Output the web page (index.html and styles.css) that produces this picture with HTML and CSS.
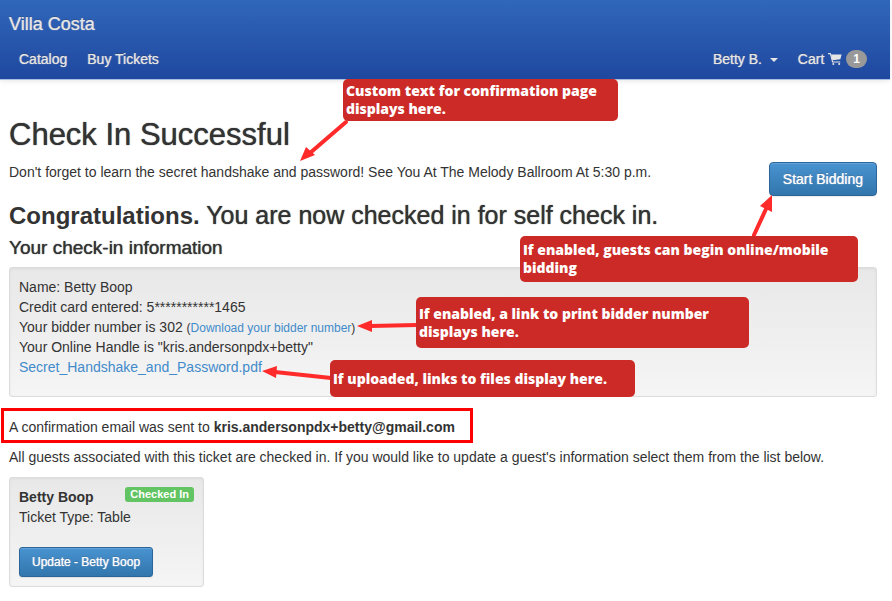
FILE: index.html
```html
<!DOCTYPE html>
<html lang="en">
<head>
<meta charset="UTF-8">
<meta name="viewport" content="width=device-width, initial-scale=1.0">
<title>Villa Costa - Check In</title>
<link rel="stylesheet" href="styles.css">
</head>
<body>
  <header class="navbar">
    <a class="brand" href="#">Villa Costa</a>
    <nav class="nav-row">
      <div class="nav-links">
        <a href="#">Catalog</a>
        <a href="#">Buy Tickets</a>
      </div>
      <div class="nav-links">
        <button type="button" class="user-menu">Betty B. <span class="caret"></span></button>
        <a class="cart" href="#">Cart
          <svg class="cart-icon" viewBox="0 0 14 12" width="14" height="12" aria-hidden="true">
            <path d="M0.5 0.6H2.4L4.6 9H11.8" fill="none" stroke="#e6e6e6" stroke-width="1.1" stroke-linecap="round" stroke-linejoin="round"/>
            <path d="M3 1.4H13.6L12.4 6.2L4.4 7.3Z" fill="#e6e6e6"/>
            <circle cx="5.3" cy="10.9" r="1" fill="#e6e6e6"/>
            <circle cx="11.2" cy="10.9" r="1" fill="#e6e6e6"/>
          </svg>
          <span class="badge">1</span>
        </a>
      </div>
    </nav>
  </header>

  <main class="container">
    <h1>Check In Successful</h1>
    <div class="intro">
      <p>Don't forget to learn the secret handshake and password! See You At The Melody Ballroom At 5:30 p.m.</p>
      <button type="button" class="btn btn-bid">Start Bidding</button>
    </div>

    <h2><strong>Congratulations.</strong> You are now checked in for self check in.</h2>
    <h3>Your check-in information</h3>
    <div class="well info">
      Name: Betty Boop<br>
      Credit card entered: 5***********1465<br>
      Your bidder number is 302 <small>(<a href="#">Download your bidder number</a>)</small><br>
      Your Online Handle is "kris.andersonpdx+betty"<br>
      <a href="#">Secret_Handshake_and_Password.pdf</a>
    </div>

    <p class="email">A confirmation email was sent to <strong>kris.andersonpdx+betty@gmail.com</strong></p>
    <p class="guests-text">All guests associated with this ticket are checked in. If you would like to update a guest's information select them from the list below.</p>

    <div class="well guest">
      <div class="guest-head">
        <strong>Betty Boop</strong>
        <span class="label">Checked In</span>
      </div>
      <div>Ticket Type: Table</div>
      <button type="button" class="btn btn-update">Update - Betty Boop</button>
    </div>
  </main>

  <!-- Help notes over the page -->
  <svg class="arrows" width="892" height="601" viewBox="0 0 892 601" aria-hidden="true">
    <g stroke="#ff2a2a" stroke-width="4" stroke-linecap="round">
      <path d="M346 122L310 153"/>
      <path d="M754 235L766 209"/>
      <path d="M417 325L370 326"/>
      <path d="M331 378L275 372"/>
    </g>
    <g fill="#ff2a2a">
      <path d="M300 161L306 147L315 155Z"/>
      <path d="M772 195L772 212L760 206Z"/>
      <path d="M357 326L372 320V332Z"/>
      <path d="M262 371L277 366L276 378Z"/>
    </g>
  </svg>
  <div class="note note-custom">Custom text for confirmation page displays here.</div>
  <div class="note note-bidding">If enabled, guests can begin online/mobile bidding</div>
  <div class="note note-number">If enabled, a link to print bidder number displays here.</div>
  <div class="note note-files">If uploaded, links to files display here.</div>
</body>
</html>
```
FILE: styles.css
```css
body {
  position: relative;
  margin: 0;
  padding-right: 2px;
  background-color: #fff;
  color: #333;
  font-family: "Helvetica Neue", "Liberation Sans", Arial, sans-serif;
  font-size: 14px;
  line-height: 20px;
}

a {
  color: #428bca;
  text-decoration: none;
}

p {
  margin: 0;
}

button {
  font-family: inherit;
  cursor: pointer;
}

/* Top bar */
.navbar {
  padding: 14px 9px 10px;
  background-image: linear-gradient(#3067bb, #1f489f);
  border-bottom: 1px solid #a9c0e4;
  box-shadow: 0 1px 5px rgba(0, 0, 0, 0.1);
}

.navbar a,
.user-menu {
  color: #e6e6e6;
  text-shadow: 0 -1px 0 rgba(0, 0, 0, 0.25), 0 0 1px #e6e6e6;
}

.navbar .brand {
  display: block;
  font-size: 18px;
}

.nav-row {
  display: flex;
  justify-content: space-between;
  margin-top: 15px;
  padding: 0 14px 0 10px;
}

.nav-links {
  display: flex;
  align-items: center;
  gap: 20px;
}

.user-menu {
  padding: 0;
  background: none;
  border: 0;
  font-size: 14px;
  line-height: 20px;
}

.caret {
  display: inline-block;
  margin-left: 4px;
  border-top: 4px solid #e6e6e6;
  border-right: 4px solid transparent;
  border-left: 4px solid transparent;
  vertical-align: middle;
}

.cart {
  display: flex;
  align-items: center;
  gap: 4px;
}

.badge {
  padding: 3px 7px;
  border-radius: 10px;
  background-color: #999;
  color: #fff;
  font-size: 12px;
  font-weight: bold;
  line-height: 12px;
  text-shadow: none;
}

/* Content */
.container {
  padding: 38px 13px 14px 9px;
}

h1,
h2,
h3 {
  margin: 0;
  font-weight: normal;
  text-shadow: 0 0 1px #333;
}

h1 {
  font-size: 31px;
  line-height: 34px;
}

.intro {
  display: flex;
  justify-content: space-between;
  margin-top: 10px;
}

h2 {
  margin-top: 6px;
  font-size: 25px;
  line-height: 26px;
}

h2 strong {
  font-size: 24px;
  text-shadow: none;
}

h3 {
  margin: 9px 0;
  font-size: 19px;
  line-height: 20px;
}

.btn {
  border: 1px solid #2b669a;
  border-radius: 4px;
  background-image: linear-gradient(#4893d1, #3276ac);
  box-shadow: inset 0 1px 0 rgba(255, 255, 255, 0.15), 0 1px 1px rgba(0, 0, 0, 0.08);
  color: #fff;
  text-shadow: 0 -1px 0 rgba(0, 0, 0, 0.2), 0 0 1px #fff;
}

.btn-bid {
  padding: 6px 13px;
  font-size: 14px;
  line-height: 20px;
}

.btn-update {
  margin-top: 20px;
  padding: 5px 12px;
  border-radius: 3px;
  font-size: 12px;
  line-height: 18px;
}

.well {
  padding: 9px;
  border: 1px solid #dcdcdc;
  border-radius: 3px;
  background-image: linear-gradient(#e8e8e8, #f5f5f5);
  box-shadow: inset 0 1px 3px rgba(0, 0, 0, 0.05);
}

.info {
  padding-bottom: 19px;
}

.info small {
  font-size: 12px;
  line-height: 12px;
}

.email {
  width: fit-content;
  margin: 11px 0 0 -8px;
  padding: 6px 15px 3px 5px;
  border: 3px solid #f00;
}

.guests-text {
  margin: 4px 0 10px;
}

.guest {
  box-sizing: border-box;
  width: 195px;
}

.guest-head {
  display: flex;
  justify-content: space-between;
  align-items: flex-start;
}

.label {
  padding: 2px 5px;
  border-radius: 3px;
  background-color: #62c462;
  color: #fff;
  font-size: 11px;
  font-weight: bold;
  line-height: 11px;
}

/* Help notes */
.arrows {
  position: absolute;
  top: 0;
  left: 0;
  pointer-events: none;
}

.note {
  position: absolute;
  box-sizing: border-box;
  display: flex;
  align-items: center;
  padding: 0 3px;
  border-radius: 5px;
  background-color: #cc2a26;
  color: #fff;
  font-family: "Open Sans", sans-serif;
  font-size: 14px;
  font-weight: 800;
  line-height: 18px;
}

.note-custom {
  top: 79px;
  left: 343px;
  width: 275px;
  height: 42px;
}

.note-bidding {
  top: 236px;
  left: 520px;
  width: 338px;
  height: 46px;
}

.note-number {
  top: 297px;
  left: 416px;
  width: 333px;
  height: 51px;
}

.note-files {
  top: 360px;
  left: 330px;
  width: 305px;
  height: 37px;
}
```
